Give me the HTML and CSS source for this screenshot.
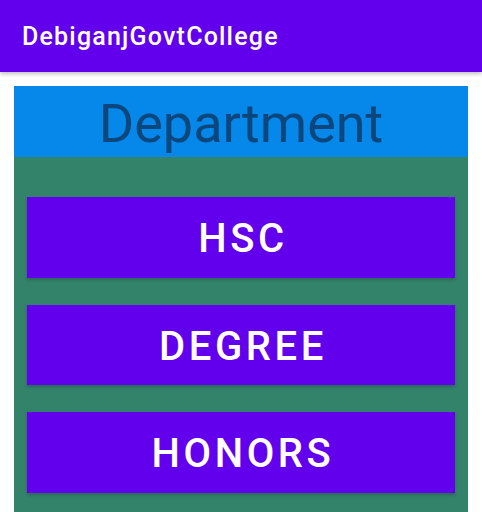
FILE: index.html
```html
<!DOCTYPE html>
<html lang="en">
<head>
    <meta charset="UTF-8">
    <meta name="viewport" content="width=device-width, initial-scale=1.0">
    <link rel="stylesheet" href="styles.css">
    <title>DebiganjGovtCollege</title>
</head>
<body>
    <header class="barra">
        <h1 class="titulo">DebiganjGovtCollege</h1>
    </header>

    <main class="tarjeta">
        <div class="cabecera">Department</div>
        <div class="lista">
            <button class="boton">HSC</button>
            <button class="boton">DEGREE</button>
            <button class="boton">HONORS</button>
        </div>
    </main>
</body>
</html>
```

FILE: styles.css
```css
body {
    margin: 0;
    font-family: Roboto, "Noto Sans", sans-serif;
    background-color: #ffffff;
    overflow: hidden;
}

.barra {
    height: 72px;
    background-color: #6200ee;
    display: flex;
    align-items: center;
    padding-left: 22px;
    box-shadow: 0 2px 4px rgba(0, 0, 0, 0.25);
}

.titulo {
    margin: 0;
    color: #ffffff;
    font-size: 25px;
    font-weight: 500;
    letter-spacing: 1.2px;
}

.tarjeta {
    margin: 14px 14px 0 14px;
}

.cabecera {
    height: 71px;
    background-color: #0588e9;
    color: #0b477c;
    font-size: 54px;
    text-align: center;
    line-height: 75px;
}

.lista {
    background-color: #33826a;
    padding: 40px 13px 40px 13px;
    display: flex;
    flex-direction: column;
    gap: 27px;
}

.boton {
    height: 80.5px;
    padding: 3px 0 0 4px;
    border: none;
    background-color: #6200ee;
    color: #ffffff;
    font-family: Roboto, sans-serif;
    font-size: 40px;
    font-weight: 500;
    letter-spacing: 0.09em;
    box-shadow: 0 2px 3px rgba(0, 0, 0, 0.2);
}
```
